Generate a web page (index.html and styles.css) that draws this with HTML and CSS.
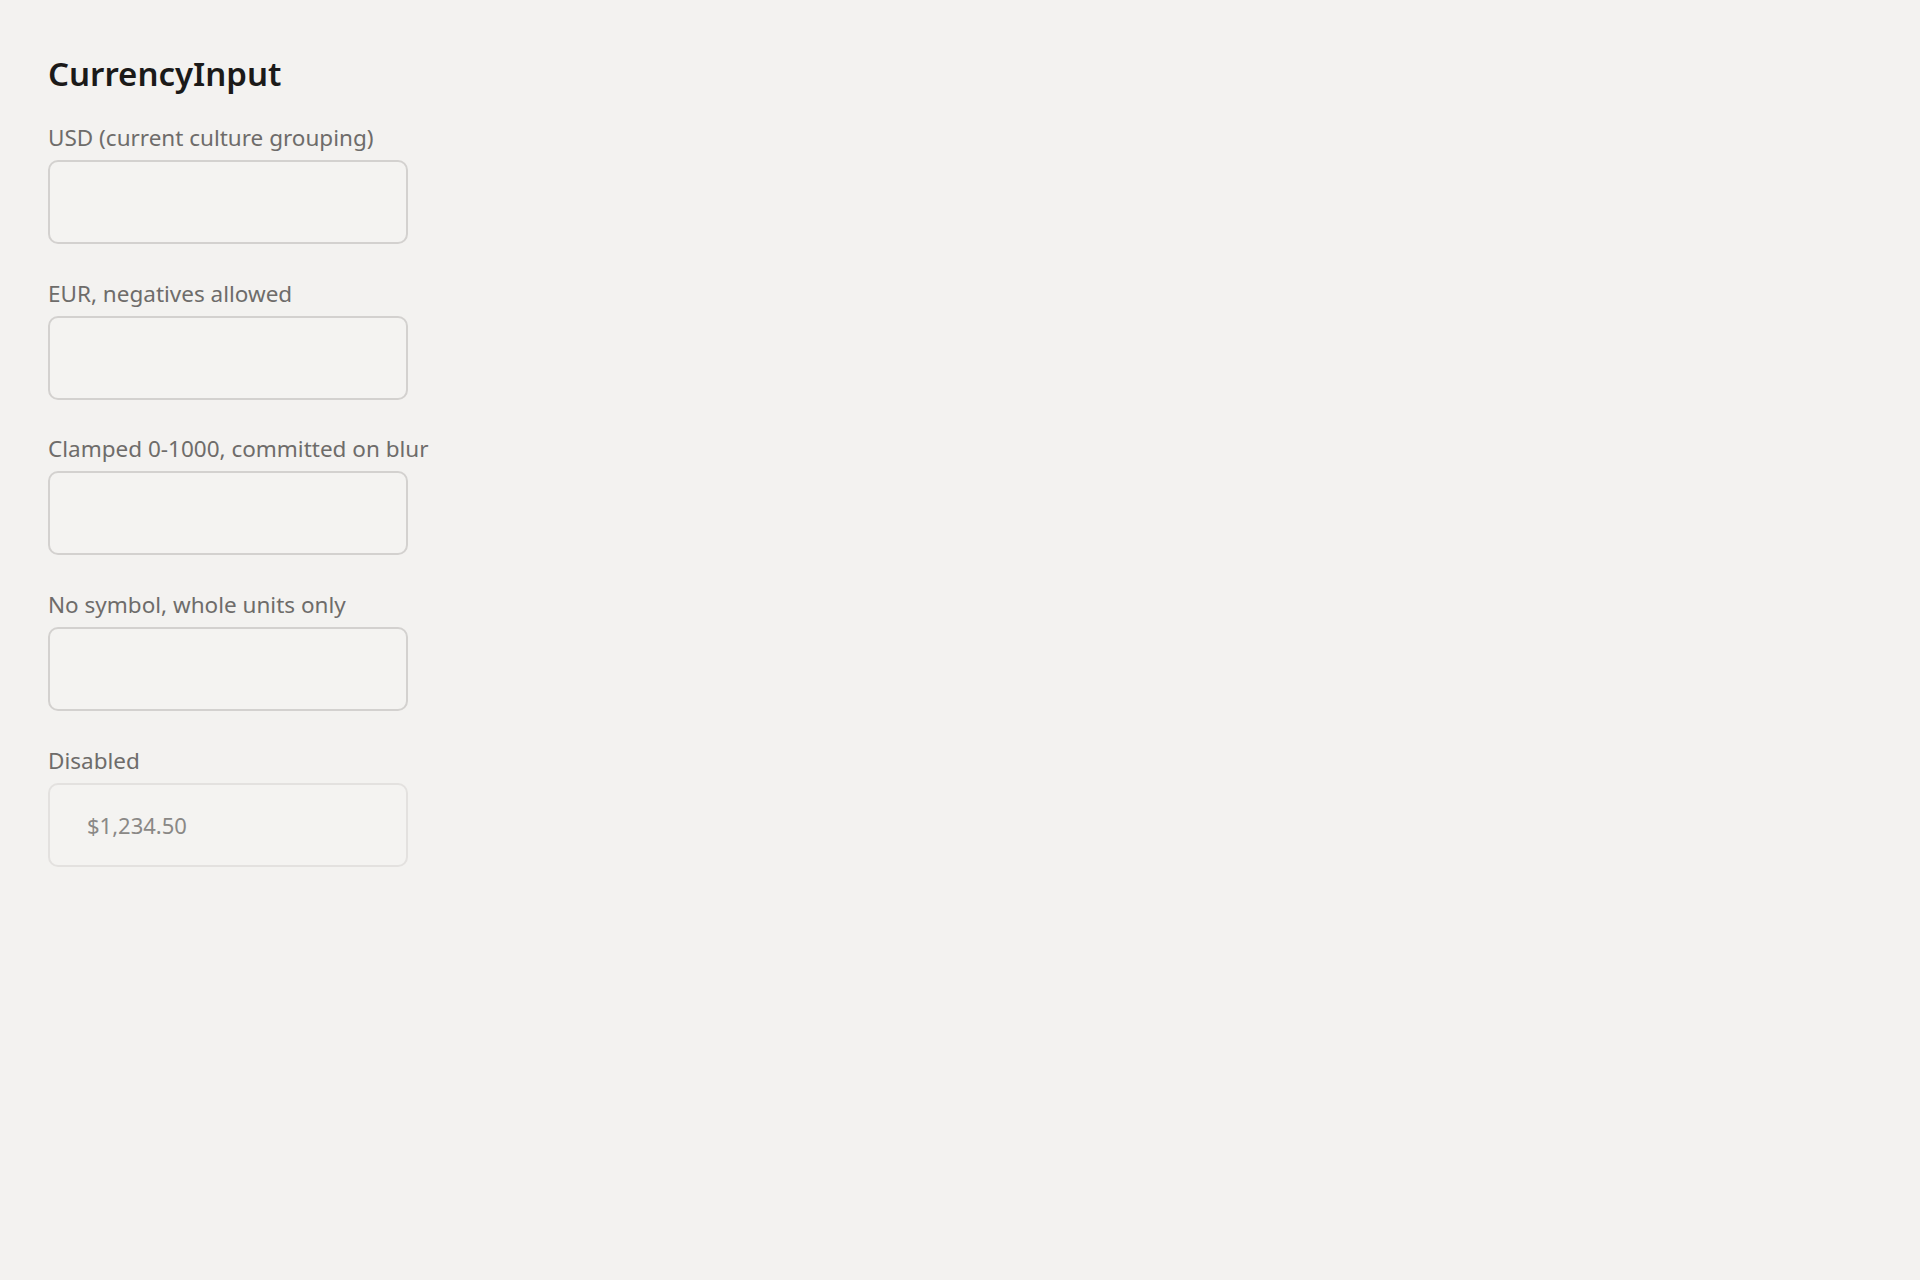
FILE: index.html
```html
<html>
    <head>
    <title>CurrencyInput</title>
    <meta http-equiv="Content-Type" content="text/html; charset=utf-8" />
    <link rel="stylesheet" href="styles.css">
    </head>

    <body>
    <!-- Demo dos campos de moeda -->
    <div class="page">
        <h1 class="page-title">CurrencyInput</h1>

        <div class="fields">
            <label class="field">
                <span class="field-label">USD (current culture grouping)</span>
                <input class="money" type="text" value="" />
            </label>
            <label class="field">
                <span class="field-label">EUR, negatives allowed</span>
                <input class="money" type="text" value="" />
            </label>
            <label class="field">
                <span class="field-label">Clamped 0-1000, committed on blur</span>
                <input class="money" type="text" value="" />
            </label>
            <label class="field">
                <span class="field-label">No symbol, whole units only</span>
                <input class="money" type="text" value="" />
            </label>
            <label class="field">
                <span class="field-label">Disabled</span>
                <input class="money" type="text" value="$1,234.50" disabled />
            </label>
        </div>
    </div>
    </body>
</html>
```

FILE: styles.css
```css
body {
    margin: 0;
    font-family: "Noto Sans", "Open Sans", sans-serif;
    background-color: #f3f2f0;
    color: #201f1e;
}
.page {
    padding: 52px 48px 48px 48px;
}
.page-title {
    margin: 0 0 27px 0;
    font-size: 33px;
    line-height: 44px;
    font-weight: 600;
    color: #1b1a19;
}
.fields {
    display: flex;
    flex-direction: column;
    gap: 34.7px;
}
.field {
    display: flex;
    flex-direction: column;
    gap: 8px;
}
.field-label {
    font-size: 22.5px;
    line-height: 29px;
    color: #6e6c6a;
}
.money {
    box-sizing: border-box;
    width: 360px;
    height: 84px;
    padding: 0 20px 0 37px;
    border: 2px solid #d3d1cf;
    border-radius: 10px;
    background-color: #f4f3f1;
    font-family: "Noto Sans", "Open Sans", sans-serif;
    font-size: 22px;
    color: #323130;
    outline: none;
}
.money:disabled {
    border-color: #e3e1df;
    color: #8a8886;
}
```
